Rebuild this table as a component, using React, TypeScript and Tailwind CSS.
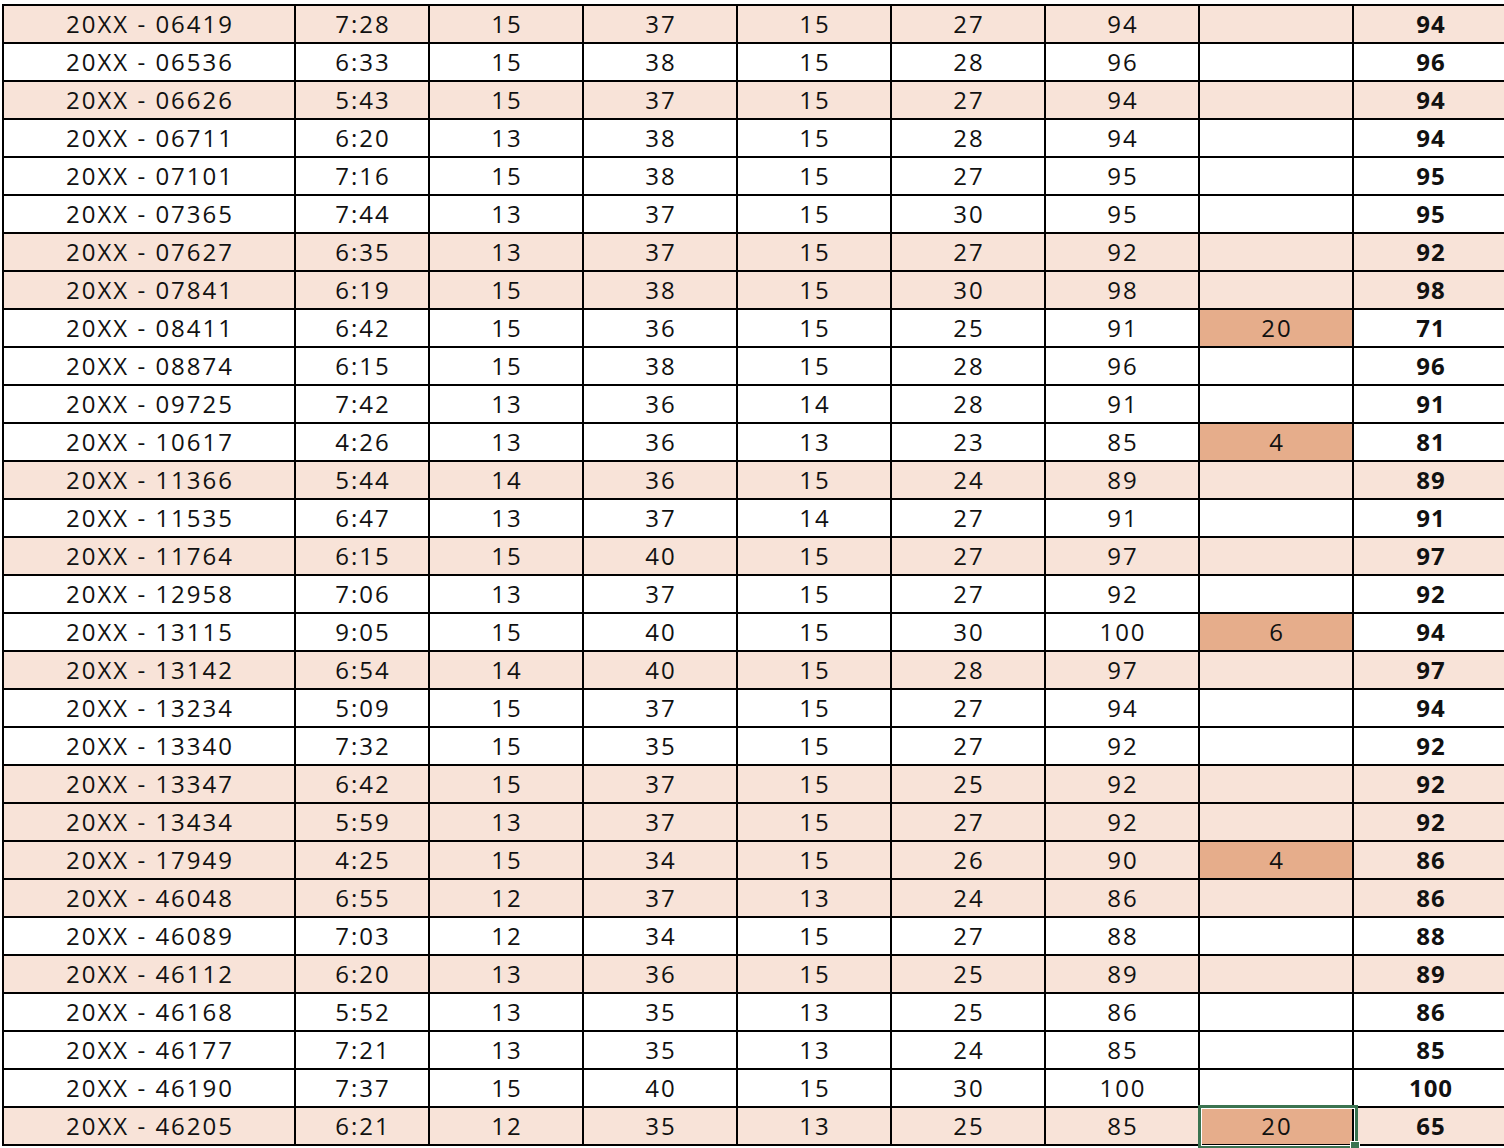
import React from 'react';

type Row = {
  id: string;
  time: string;
  a: number;
  b: number;
  c: number;
  d: number;
  total: number;
  deduct?: number;
  final: number;
  shaded?: boolean;
};

const rows: Row[] = [
  { id: '06419', time: '7:28', a: 15, b: 37, c: 15, d: 27, total: 94, final: 94, shaded: true },
  { id: '06536', time: '6:33', a: 15, b: 38, c: 15, d: 28, total: 96, final: 96 },
  { id: '06626', time: '5:43', a: 15, b: 37, c: 15, d: 27, total: 94, final: 94, shaded: true },
  { id: '06711', time: '6:20', a: 13, b: 38, c: 15, d: 28, total: 94, final: 94 },
  { id: '07101', time: '7:16', a: 15, b: 38, c: 15, d: 27, total: 95, final: 95 },
  { id: '07365', time: '7:44', a: 13, b: 37, c: 15, d: 30, total: 95, final: 95 },
  { id: '07627', time: '6:35', a: 13, b: 37, c: 15, d: 27, total: 92, final: 92, shaded: true },
  { id: '07841', time: '6:19', a: 15, b: 38, c: 15, d: 30, total: 98, final: 98, shaded: true },
  { id: '08411', time: '6:42', a: 15, b: 36, c: 15, d: 25, total: 91, deduct: 20, final: 71 },
  { id: '08874', time: '6:15', a: 15, b: 38, c: 15, d: 28, total: 96, final: 96 },
  { id: '09725', time: '7:42', a: 13, b: 36, c: 14, d: 28, total: 91, final: 91 },
  { id: '10617', time: '4:26', a: 13, b: 36, c: 13, d: 23, total: 85, deduct: 4, final: 81 },
  { id: '11366', time: '5:44', a: 14, b: 36, c: 15, d: 24, total: 89, final: 89, shaded: true },
  { id: '11535', time: '6:47', a: 13, b: 37, c: 14, d: 27, total: 91, final: 91 },
  { id: '11764', time: '6:15', a: 15, b: 40, c: 15, d: 27, total: 97, final: 97, shaded: true },
  { id: '12958', time: '7:06', a: 13, b: 37, c: 15, d: 27, total: 92, final: 92 },
  { id: '13115', time: '9:05', a: 15, b: 40, c: 15, d: 30, total: 100, deduct: 6, final: 94 },
  { id: '13142', time: '6:54', a: 14, b: 40, c: 15, d: 28, total: 97, final: 97, shaded: true },
  { id: '13234', time: '5:09', a: 15, b: 37, c: 15, d: 27, total: 94, final: 94 },
  { id: '13340', time: '7:32', a: 15, b: 35, c: 15, d: 27, total: 92, final: 92 },
  { id: '13347', time: '6:42', a: 15, b: 37, c: 15, d: 25, total: 92, final: 92, shaded: true },
  { id: '13434', time: '5:59', a: 13, b: 37, c: 15, d: 27, total: 92, final: 92, shaded: true },
  { id: '17949', time: '4:25', a: 15, b: 34, c: 15, d: 26, total: 90, deduct: 4, final: 86, shaded: true },
  { id: '46048', time: '6:55', a: 12, b: 37, c: 13, d: 24, total: 86, final: 86, shaded: true },
  { id: '46089', time: '7:03', a: 12, b: 34, c: 15, d: 27, total: 88, final: 88 },
  { id: '46112', time: '6:20', a: 13, b: 36, c: 15, d: 25, total: 89, final: 89, shaded: true },
  { id: '46168', time: '5:52', a: 13, b: 35, c: 13, d: 25, total: 86, final: 86 },
  { id: '46177', time: '7:21', a: 13, b: 35, c: 13, d: 24, total: 85, final: 85 },
  { id: '46190', time: '7:37', a: 15, b: 40, c: 15, d: 30, total: 100, final: 100 },
  { id: '46205', time: '6:21', a: 12, b: 35, c: 13, d: 25, total: 85, deduct: 20, final: 65, shaded: true },
];

const cell = 'shrink-0 h-full border-l-2 border-black flex items-center justify-center pl-[2px]';

export default function App() {
  return (
    <div
      className="w-full h-[1148px] overflow-hidden bg-white pt-[4px] pl-[2px] text-[24px] tracking-[2px] text-[#111]"
      style={{ fontFamily: '"Open Sans", "Noto Sans", sans-serif' }}
    >
      <div className="w-max border-b-2 border-black">
        {rows.map((r, i) => {
          const last = i === rows.length - 1;
          return (
            <div
              key={r.id}
              className={`flex h-[38px] border-t-2 border-black ${r.shaded ? 'bg-[#f8e3d8]' : 'bg-white'}`}
            >
              <div className={`${cell} w-[292px]`}>20XX - {r.id}</div>
              <div className={`${cell} w-[134px]`}>{r.time}</div>
              <div className={`${cell} w-[154px]`}>{r.a}</div>
              <div className={`${cell} w-[154px]`}>{r.b}</div>
              <div className={`${cell} w-[154px]`}>{r.c}</div>
              <div className={`${cell} w-[154px]`}>{r.d}</div>
              <div className={`${cell} w-[154px]`}>{r.total}</div>
              <div className={`${cell} w-[154px] relative ${r.deduct !== undefined ? 'bg-[#e6ad8b]' : ''}`}>
                {r.deduct}
                {last && (
                  <div className="absolute -left-[2px] -top-[3px] w-[160px] h-[44px] border-[3px] border-[#3b7350] pointer-events-none">
                    <div className="w-full h-full border border-white" />
                    <div className="absolute -right-[5px] -bottom-[5px] w-[10px] h-[10px] bg-[#3b7350] border border-white" />
                  </div>
                )}
              </div>
              <div className={`${cell} w-[154px] font-bold tracking-[1px]`}>{r.final}</div>
            </div>
          );
        })}
      </div>
    </div>
  );
}
